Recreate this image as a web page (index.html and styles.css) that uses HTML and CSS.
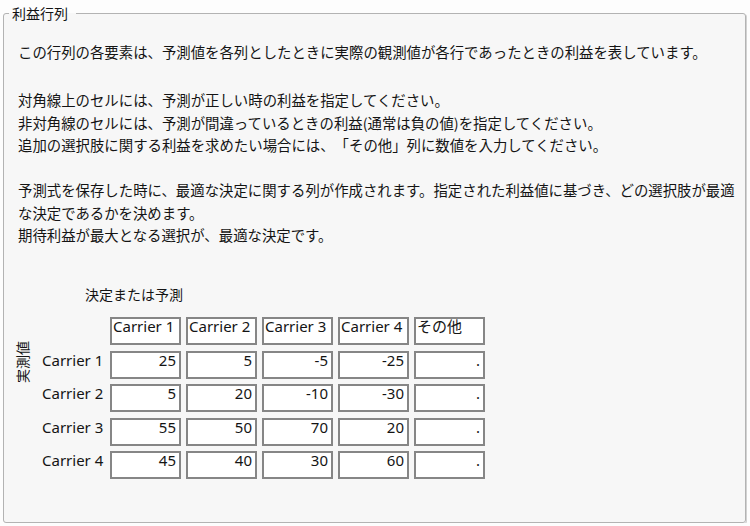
FILE: index.html
```html
<!DOCTYPE html>
<html lang="ja">
<head>
<meta charset="utf-8">
<title>利益行列</title>
<link rel="stylesheet" href="styles.css">
</head>
<body>
<fieldset class="panel">
  <legend class="panel-title">利益行列</legend>
  <div class="desc">
    <p class="para para-first">この行列の各要素は、予測値を各列としたときに実際の観測値が各行であったときの利益を表しています。</p>
    <p class="para">対角線上のセルには、予測が正しい時の利益を指定してください。<br>非対角線のセルには、予測が間違っているときの利益(通常は負の値)を指定してください。<br>追加の選択肢に関する利益を求めたい場合には、「その他」列に数値を入力してください。</p>
    <p class="para">予測式を保存した時に、最適な決定に関する列が作成されます。指定された利益値に基づき、どの選択肢が最適な決定であるかを決めます。<br>期待利益が最大となる選択が、最適な決定です。</p>
  </div>
  <div class="matrix">
    <div class="col-title">決定または予測</div>
    <div class="matrix-body">
      <div class="axis">実測値</div>
      <div class="grid">
        <div class="row-label"></div>
        <div class="cell head">Carrier 1</div>
        <div class="cell head">Carrier 2</div>
        <div class="cell head">Carrier 3</div>
        <div class="cell head">Carrier 4</div>
        <div class="cell head">その他</div>

        <div class="row-label">Carrier 1</div>
        <div class="cell num">25</div>
        <div class="cell num">5</div>
        <div class="cell num">-5</div>
        <div class="cell num">-25</div>
        <div class="cell num">.</div>

        <div class="row-label">Carrier 2</div>
        <div class="cell num">5</div>
        <div class="cell num">20</div>
        <div class="cell num">-10</div>
        <div class="cell num">-30</div>
        <div class="cell num">.</div>

        <div class="row-label">Carrier 3</div>
        <div class="cell num">55</div>
        <div class="cell num">50</div>
        <div class="cell num">70</div>
        <div class="cell num">20</div>
        <div class="cell num">.</div>

        <div class="row-label">Carrier 4</div>
        <div class="cell num">45</div>
        <div class="cell num">40</div>
        <div class="cell num">30</div>
        <div class="cell num">60</div>
        <div class="cell num">.</div>
      </div>
    </div>
  </div>
</fieldset>
</body>
</html>
```
FILE: styles.css
```css
html, body {
  margin: 0;
  padding: 0;
  background: #fdfdfd;
}

body {
  font-family: "Noto Sans CJK JP", "Noto Sans", sans-serif;
  font-size: 14px;
  color: #141414;
  text-spacing-trim: space-all;
}

.panel {
  margin: 4px 4px 0 3px;
  padding: 19px 4px 43px 14px;
  border: 1px solid #b3b3b3;
  border-radius: 3px;
  box-shadow: 1px 1px 0 #d2d2d2;
  background: #f7f7f7;
  min-width: 0;
}

.panel-title {
  margin-left: -9px;
  padding: 0 8px 0 3px;
  font-size: 14px;
  line-height: 18px;
}

.desc {
  font-size: 14.4px;
}

.para {
  margin: 0 0 22.5px 0;
  line-height: 22.5px;
}

.para-first {
  margin-bottom: 25.5px;
}

.desc .para:last-child {
  margin-bottom: 0;
}

.matrix {
  margin-top: 36.5px;
}

.col-title {
  margin-left: 67px;
  line-height: 22.5px;
  margin-bottom: 11.75px;
}

.matrix-body {
  display: flex;
  align-items: flex-start;
}

.axis {
  margin-left: -3px;
  margin-top: 24px;
  width: 15px;
  line-height: 15px;
  writing-mode: vertical-rl;
  text-orientation: sideways;
  transform: rotate(180deg);
}

.grid {
  margin-left: 12px;
  display: grid;
  grid-template-columns: 63px repeat(5, 71px);
  column-gap: 5px;
  row-gap: 5.5px;
  font-family: "Noto Sans", "Noto Sans CJK JP", sans-serif;
  font-size: 15px;
}

.row-label {
  padding-top: 2px;
  line-height: 15px;
  white-space: nowrap;
}

.cell {
  height: 28px;
  box-sizing: border-box;
  border: 2px solid #868686;
  background: #ffffff;
  line-height: 15px;
  white-space: nowrap;
  overflow: hidden;
}

.head {
  padding-left: 1px;
}

.head:last-child {
  font-size: 14px;
}

.num {
  text-align: right;
  padding-right: 3px;
}
```
